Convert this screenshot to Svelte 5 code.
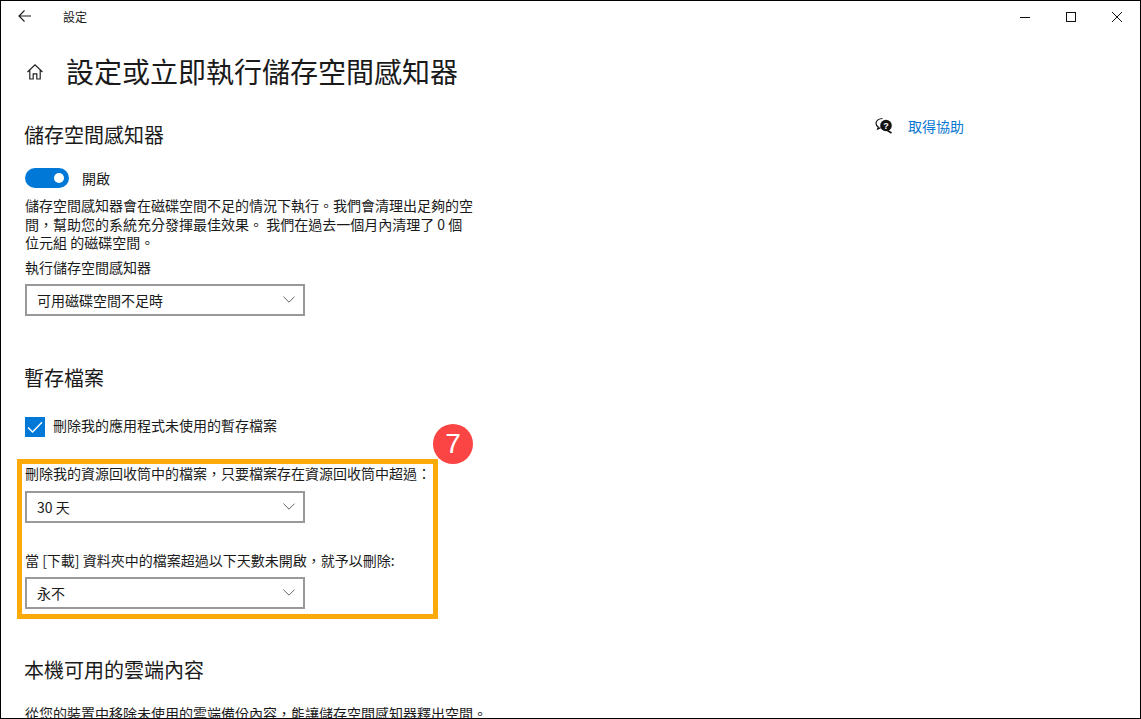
<script>
  // 下拉選單與區段內容
  const sensorOption = "可用磁碟空間不足時";
  const recycleOption = "30 天";
  const downloadOption = "永不";
</script>

<div class="window" lang="zh-TW">
  <header class="titlebar">
    <div class="title-left">
      <svg class="back" width="16" height="16" viewBox="0 0 16 16">
        <path d="M14 8H2.5M7.5 2.5 2 8l5.5 5.5" fill="none" stroke="#1a1a1a" stroke-width="1.1" />
      </svg>
      <span class="app-name">設定</span>
    </div>
    <div class="controls">
      <svg width="46" height="16" viewBox="0 0 46 16"><path d="M18 8.5h10" stroke="#111" stroke-width="1" /></svg>
      <svg width="46" height="16" viewBox="0 0 46 16"><rect x="18.5" y="3.5" width="9" height="9" fill="none" stroke="#111" stroke-width="1" /></svg>
      <svg width="46" height="16" viewBox="0 0 46 16"><path d="M18 3l10 10M28 3 18 13" stroke="#111" stroke-width="1" /></svg>
    </div>
  </header>

  <div class="page">
    <main class="content">
      <div class="page-title">
        <svg class="home" width="18" height="18" viewBox="0 0 18 18">
          <path d="M1.5 9 9 1.8 16.5 9M3.8 7.2V16H7.2V10.8H10.8V16H14.2V7.2" fill="none" stroke="#222" stroke-width="1.2" />
        </svg>
        <h1>設定或立即執行儲存空間感知器</h1>
      </div>

      <h2 class="first">儲存空間感知器</h2>
      <div class="toggle-row">
        <span class="toggle"><span class="knob"></span></span>
        <span>開啟</span>
      </div>
      <p class="desc">儲存空間感知器會在磁碟空間不足的情況下執行。我們會清理出足夠的空間，幫助您的系統充分發揮最佳效果。 我們在過去一個月內清理了 0 個位元組 的磁碟空間。</p>
      <div class="label sensor-label">執行儲存空間感知器</div>
      <div class="select"><span>{sensorOption}</span><svg width="12" height="7" viewBox="0 0 12 7"><path d="M.4.6 6 6.2 11.6.6" fill="none" stroke="#666" stroke-width="1" /></svg></div>

      <h2 class="temp">暫存檔案</h2>
      <div class="check-row">
        <span class="check">
          <svg width="20" height="20" viewBox="0 0 20 20"><path d="M3 10.5 7.6 15 17 5.2" fill="none" stroke="#fff" stroke-width="1.4" /></svg>
        </span>
        <span class="check-text">刪除我的應用程式未使用的暫存檔案</span>
      </div>

      <section class="highlight">
        <span class="badge">7</span>
        <div class="label">刪除我的資源回收筒中的檔案，只要檔案存在資源回收筒中超過：</div>
        <div class="select recycle"><span>{recycleOption}</span><svg width="12" height="7" viewBox="0 0 12 7"><path d="M.4.6 6 6.2 11.6.6" fill="none" stroke="#666" stroke-width="1" /></svg></div>
        <div class="label second">當 [下載] 資料夾中的檔案超過以下天數未開啟，就予以刪除:</div>
        <div class="select"><span>{downloadOption}</span><svg width="12" height="7" viewBox="0 0 12 7"><path d="M.4.6 6 6.2 11.6.6" fill="none" stroke="#666" stroke-width="1" /></svg></div>
      </section>

      <h2 class="cloud">本機可用的雲端內容</h2>
      <p class="cut">從您的裝置中移除未使用的雲端備份內容，能讓儲存空間感知器釋出空間。</p>
    </main>

    <aside class="help">
      <svg width="18" height="18" viewBox="0 0 18 18">
        <path d="M7.5 1.5C4 1.5 1 3.6 1 6.3c0 1.5.9 2.8 2.3 3.6L2.6 12l3-1.4" fill="none" stroke="#111" stroke-width="1.2" />
        <circle cx="11" cy="8.5" r="5.8" fill="#111" />
        <path d="M12.5 13.5 16.5 16" stroke="#111" stroke-width="1.6" />
        <text x="11" y="11.7" text-anchor="middle" class="q">?</text>
      </svg>
      <a href="#help" class="help-link">取得協助</a>
    </aside>
  </div>
</div>

<style>
  :global(body) {
    background: #fff;
  }
  .window {
    box-sizing: border-box;
    width: 1141px;
    height: 719px;
    overflow: hidden;
    border: 1px solid #000;
    background: #fff;
    color: #1a1a1a;
    font-family: "Noto Sans CJK TC", "Noto Sans", sans-serif;
    font-size: 14px;
    line-height: 18px;
  }
  .titlebar {
    display: flex;
    justify-content: space-between;
    align-items: center;
    height: 32px;
  }
  .title-left {
    display: flex;
    align-items: center;
  }
  .back {
    margin-left: 16px;
    margin-top: -2px;
  }
  .app-name {
    margin-left: 30px;
    font-size: 12px;
  }
  .controls {
    display: flex;
    margin-top: -1px;
  }
  .controls svg {
    display: block;
  }
  .page {
    display: flex;
  }
  .content {
    width: 600px;
    padding-left: 24px;
    box-sizing: border-box;
  }
  .page-title {
    display: flex;
    align-items: center;
    height: 40px;
    margin-top: 18px;
  }
  .home {
    margin-left: 1px;
    margin-top: 1px;
  }
  h1 {
    margin: 0 0 0 22px;
    font-size: 28px;
    font-weight: 400;
    line-height: 40px;
  }
  h2 {
    margin: 0 0 0 -1px;
    font-size: 20px;
    font-weight: 400;
    line-height: 28px;
  }
  h2.first {
    margin-top: 30px;
  }
  .toggle-row {
    display: flex;
    align-items: center;
    gap: 13px;
    margin-top: 19px;
  }
  .toggle {
    position: relative;
    display: block;
    width: 44px;
    height: 20px;
    border-radius: 10px;
    background: #0078d7;
  }
  .knob {
    position: absolute;
    left: 29px;
    top: 5px;
    width: 10px;
    height: 10px;
    border-radius: 50%;
    background: #fff;
  }
  .desc {
    width: 450px;
    margin: 8px 0 0;
    line-height: 18.5px;
  }
  .label {
    white-space: nowrap;
  }
  .sensor-label {
    margin-top: 6px;
  }
  .select {
    box-sizing: border-box;
    display: flex;
    justify-content: space-between;
    align-items: center;
    width: 280px;
    height: 32px;
    margin-top: 8px;
    padding: 0 8px 0 10px;
    border: 2px solid #999;
    background: #fff;
  }
  .select svg {
    display: block;
  }
  h2.temp {
    margin-top: 48px;
  }
  .check-row {
    display: flex;
    align-items: center;
    gap: 8px;
    margin-top: 25px;
  }
  .check {
    display: block;
    width: 20px;
    height: 20px;
    background: #0078d7;
  }
  .check svg {
    display: block;
  }
  .check-text {
    margin-top: -3px;
  }
  .highlight {
    position: relative;
    box-sizing: border-box;
    width: 421px;
    height: 160px;
    margin: 22px 0 0 -8px;
    padding: 0 3px;
    border: 5px solid #fbaa0a;
  }
  .select.recycle {
    margin-top: 9px;
  }
  .second {
    margin-top: 28px;
  }
  .badge {
    position: absolute;
    right: -40px;
    top: -40px;
    width: 40px;
    height: 40px;
    border-radius: 50%;
    background: #fb4444;
    color: #fff;
    font-size: 28px;
    line-height: 40px;
    text-align: center;
    font-family: "Liberation Sans", sans-serif;
  }
  h2.cloud {
    margin-top: 37px;
  }
  .cut {
    margin: 20px 0 0;
    white-space: nowrap;
  }
  .help {
    display: flex;
    align-items: center;
    gap: 15px;
    height: 20px;
    margin-left: 274px;
    margin-top: 83px;
  }
  .help svg {
    display: block;
  }
  .q {
    fill: #fff;
    font-family: "Liberation Sans", sans-serif;
    font-size: 9px;
    font-weight: 700;
  }
  .help-link {
    color: #0a78d2;
    text-decoration: none;
  }
</style>
